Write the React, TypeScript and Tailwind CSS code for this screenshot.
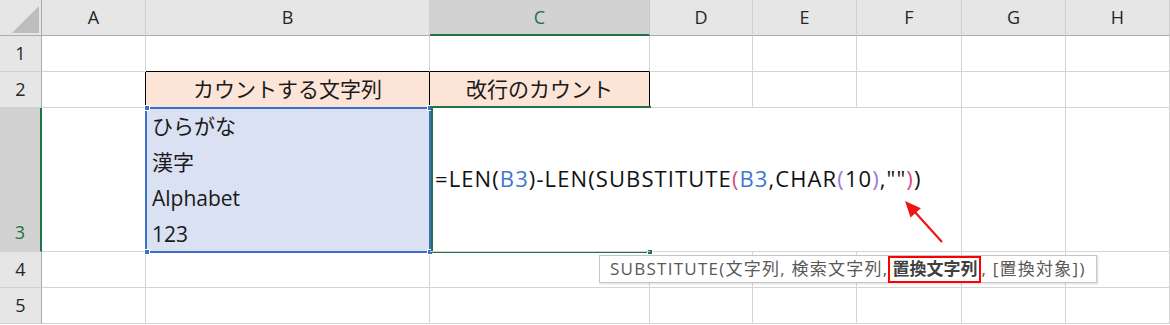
import React from 'react';

const COLS = ['A', 'B', 'C', 'D', 'E', 'F', 'G', 'H'];

const grid = 'border-r border-b border-[#d4d4d4]';

const RowHead: React.FC<{ n: number; active?: boolean }> = ({ n, active }) =>
  active ? (
    <div className="flex items-end justify-center pb-[1px] leading-[36px] bg-[#d2d2d2] border-r-2 border-r-[#217346] border-b border-b-[#d0d0d0] text-[#217346]">
      {n}
    </div>
  ) : (
    <div className="flex items-center justify-center bg-[#e6e6e6] border-r border-r-[#ababab] border-b border-b-[#d0d0d0] text-[#262626]">
      {n}
    </div>
  );

export default function App() {
  return (
    <div className="relative w-[1170px] h-[325px] overflow-hidden bg-white font-['Open_Sans','Noto_Sans_CJK_JP',sans-serif]">
      <div className="grid grid-cols-[42px_104px_284px_220px_103px_104px_105px_104px_104px] grid-rows-[36px_36px_36px_144px_36px_36px] text-[18px]">
        {/* header row */}
        <div className="relative bg-[#e6e6e6] border-r border-b border-[#ababab]">
          <svg className="absolute left-[11px] top-[5px]" width="29" height="29" viewBox="0 0 29 29">
            <polygon points="1,28 28,28 28,1" fill="#bdbdbd" />
          </svg>
        </div>
        {COLS.map((c) =>
          c === 'C' ? (
            <div
              key={c}
              className="flex items-center justify-center bg-[#d2d2d2] border-r border-r-[#c8c8c8] border-b-2 border-b-[#217346] text-[#217346]"
            >
              {c}
            </div>
          ) : (
            <div
              key={c}
              className="flex items-center justify-center bg-[#e6e6e6] border-r border-r-[#d0d0d0] border-b border-b-[#ababab] text-[#262626]"
            >
              {c}
            </div>
          )
        )}

        {/* row 1 */}
        <RowHead n={1} />
        <div className={grid} />
        <div className="border-r border-b border-r-[#d4d4d4] border-b-black" />
        <div className="border-r border-b border-r-[#d4d4d4] border-b-black" />
        <div className={grid} />
        <div className={grid} />
        <div className={grid} />
        <div className={grid} />
        <div className={grid} />

        {/* row 2 */}
        <RowHead n={2} />
        <div className="border-r border-b border-r-black border-b-[#d4d4d4]" />
        <div className="flex items-center justify-center bg-[#fce4d6] border-r border-b border-black text-[21px] text-[#1a1a1a]">
          カウントする文字列
        </div>
        <div className="flex items-center justify-center bg-[#fce4d6] border-r border-b border-black text-[21px] text-[#1a1a1a]">
          改行のカウント
        </div>
        <div className={grid} />
        <div className={grid} />
        <div className={grid} />
        <div className={grid} />
        <div className={grid} />

        {/* row 3 */}
        <RowHead n={3} active />
        <div className={grid} />
        <div className="bg-[#d9e1f2] border-r border-b border-[#d4d4d4] pl-[6px] text-[21px] leading-[36px] text-[#1a1a1a]">
          <div>ひらがな</div>
          <div>漢字</div>
          <div>Alphabet</div>
          <div>123</div>
        </div>
        <div className="relative z-10 flex items-center border-b border-[#d4d4d4] pl-[5px] pb-[2px] whitespace-nowrap text-[22px] tracking-[1.1px] text-[#111]">
          <span>=LEN(</span>
          <span className="text-[#3f78cf]">B3</span>
          <span>)-LEN(SUBSTITUTE</span>
          <span className="text-[#d0508a]">(</span>
          <span className="text-[#3f78cf]">B3</span>
          <span>,CHAR</span>
          <span className="text-[#9d78d6]">(</span>
          <span>10</span>
          <span className="text-[#9d78d6]">)</span>
          <span>,""</span>
          <span className="inline-block w-px h-[30px] bg-black" />
          <span className="text-[#d0508a]">)</span>
          <span>)</span>
        </div>
        <div className="border-b border-[#d4d4d4]" />
        <div className="border-b border-[#d4d4d4]" />
        <div className={grid} />
        <div className={grid} />
        <div className={grid} />

        {/* rows 4-5 */}
        {[4, 5].map((r) => (
          <React.Fragment key={r}>
            <RowHead n={r} />
            {COLS.map((c) => (
              <div key={c} className={grid} />
            ))}
          </React.Fragment>
        ))}
      </div>

      {/* reference range around B3 */}
      <div className="absolute left-[145px] top-[107px] w-[286px] h-[146px] border-2 border-[#3c70c8]" />
      <div className="absolute left-[144px] top-[105px] w-[6px] h-[6px] bg-[#3c70c8] border border-white" />
      <div className="absolute left-[427px] top-[105px] w-[6px] h-[6px] bg-[#3c70c8] border border-white" />
      <div className="absolute left-[144px] top-[249px] w-[6px] h-[6px] bg-[#3c70c8] border border-white" />
      <div className="absolute left-[427px] top-[249px] w-[6px] h-[6px] bg-[#3c70c8] border border-white" />

      {/* active cell C3 */}
      <div className="absolute left-[431px] top-[106px] w-[220px] h-[147px] border-t-2 border-l-2 border-b-2 border-[#217346]" />
      <div className="absolute left-[647px] top-[249px] w-[6px] h-[6px] bg-[#217346] border border-white" />

      {/* red arrow */}
      <svg className="absolute left-[895px] top-[195px]" width="60" height="55" viewBox="0 0 60 55">
        <line x1="47" y1="47" x2="19" y2="16" stroke="#f01414" strokeWidth="2.2" />
        <polygon points="10,6 25.9,13.2 15.5,22.6" fill="#f01414" />
      </svg>

      {/* function tooltip */}
      <div className="absolute left-[599px] top-[255px] h-[28px] flex items-center px-[10px] bg-white border border-[#c6c6c6] shadow-[1px_1px_2px_rgba(0,0,0,0.15)] text-[17px] text-[#595959] whitespace-nowrap">
        <span className="tracking-[1.25px]">SUBSTITUTE(文字列, 検索文字列, </span>
        <span className="px-[2px] h-[27px] flex items-center border-2 border-[#ff0000] font-bold text-[#404040]">
          置換文字列
        </span>
        <span className="tracking-[1.25px]">, [置換対象])</span>
      </div>
    </div>
  );
}
